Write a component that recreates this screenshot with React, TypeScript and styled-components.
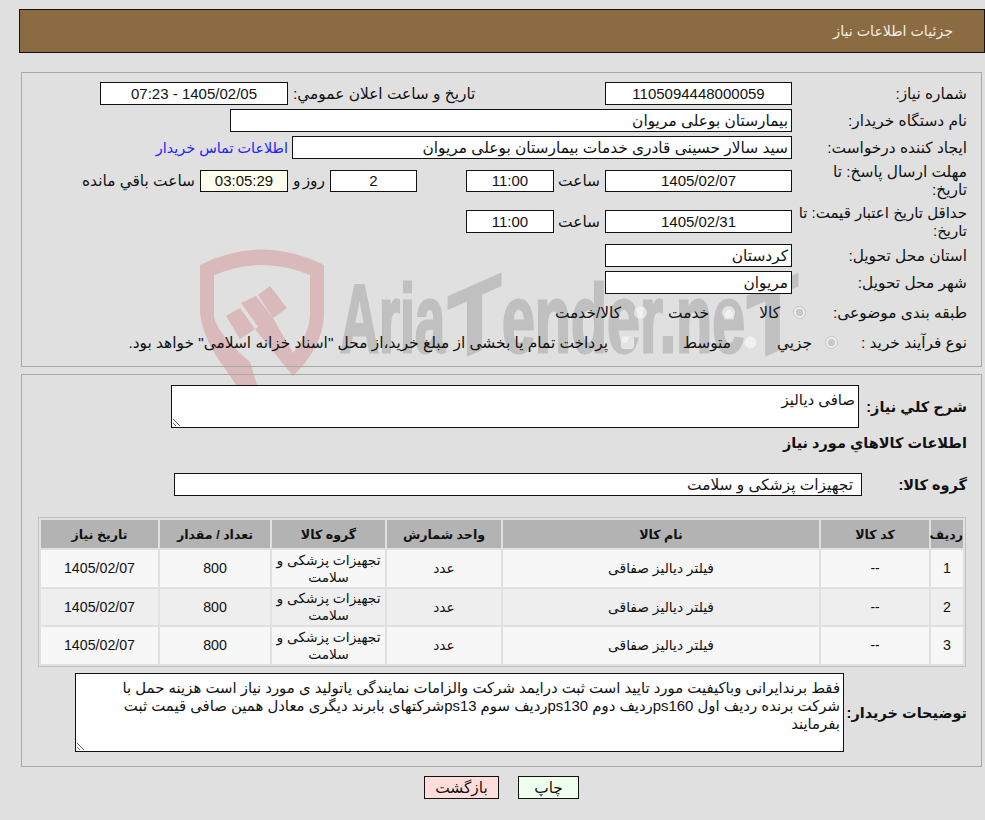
import styled, { createGlobalStyle } from 'styled-components'

const GlobalStyle = createGlobalStyle`
  html, body {
    margin: 0;
    padding: 0;
    background: #e0e0e0;
  }

  body {
    font-family: 'Liberation Sans', 'DejaVu Sans', sans-serif;
    font-size: 15.4px;
    color: #111;
  }
`

const Page = styled.div`
  position: relative;
  width: 985px;
  height: 820px;
  padding: 9px 0 0 19px;
  box-sizing: border-box;
  overflow: hidden;
`

const Watermark = styled.svg`
  position: absolute;
  left: 0;
  top: 0;
  width: 985px;
  height: 400px;
`

const WatermarkText = styled.text`
  fill: #c0c0c0;
  stroke: #c0c0c0;
  stroke-width: 3px;
  font-family: 'Liberation Sans Narrow', 'Liberation Sans', sans-serif;
  font-weight: 700;
  font-size: 96px;
`

const Content = styled.div`
  position: relative;
  direction: rtl;
`

const Header = styled.header`
  height: 44px;
  box-sizing: border-box;
  border: 1px solid #111;
  background: #8b6b42;
  color: #f4efe6;
  padding-right: 31px;
  font-size: 14.2px;
  line-height: 42px;
  margin-bottom: 19px;
`

const Panel = styled.section<{ $height: number; $top: number }>`
  width: 961px;
  height: ${({ $height }) => $height}px;
  margin: 0 3px 7px 0;
  box-sizing: border-box;
  border: 1px solid #a8a8a8;
  padding: ${({ $top }) => $top}px 14px 0 0;
`

const Stack = styled.div`
  display: flex;
  flex-direction: column;
  gap: 4px;
`

const Row = styled.div<{ $height?: number }>`
  display: flex;
  align-items: center;
  height: ${({ $height }) => $height ?? 23}px;
`

const Label = styled.div<{ $width?: number }>`
  width: ${({ $width }) => $width ?? 175}px;
  flex: none;
  line-height: 18px;
  white-space: nowrap;
`

const SmallLabel = styled(Label)`
  font-size: 15px;
`

const BoldLabel = styled(Label)`
  font-size: 14.5px;
  font-weight: 700;
`

const Field = styled.div<{ $width: number; $height?: number; $alignRight?: boolean; $warm?: boolean; $digits?: boolean }>`
  width: ${({ $width }) => $width}px;
  height: ${({ $height }) => $height ?? 23}px;
  flex: none;
  box-sizing: border-box;
  border: 1px solid #111;
  background: ${({ $warm }) => ($warm ? '#ffffee' : '#fff')};
  padding: 0 3px;
  font-size: ${({ $digits }) => ($digits ? '15px' : 'inherit')};
  line-height: ${({ $height }) => ($height ?? 23) - 2}px;
  text-align: ${({ $alignRight }) => ($alignRight ? 'right' : 'center')};
`

const GroupField = styled(Field)`
  padding-right: 8px;
`

const Caption = styled.div<{ $width: number; $end?: boolean }>`
  width: ${({ $width }) => $width}px;
  flex: none;
  box-sizing: border-box;
  padding: 0 5px;
  white-space: nowrap;
  text-align: ${({ $end }) => ($end ? 'left' : 'center')};
`

const DayCaption = styled(Caption)`
  word-spacing: -2px;
`

const ContactLink = styled.a`
  margin-right: 4px;
  color: #2323ff;
  font-size: 14.4px;
  white-space: nowrap;
`

const ChoiceRow = styled(Row)<{ $first?: boolean }>`
  height: 30px;
  margin-top: ${({ $first }) => ($first ? 4 : 0)}px;
`

const Option = styled.label<{ $width?: number }>`
  display: flex;
  align-items: center;
  gap: 13px;
  flex: none;
  width: ${({ $width }) => ($width ? `${$width}px` : 'auto')};
  white-space: nowrap;
`

const Radio = styled.span<{ $checked?: boolean; $square?: boolean }>`
  width: 13px;
  height: 13px;
  flex: none;
  box-sizing: border-box;
  margin-bottom: 2px;
  border: 1px solid ${({ $checked }) => ($checked ? '#c4c4c4' : '#e8e8e8')};
  border-radius: ${({ $square }) => ($square ? '3px' : '50%')};
  background: ${({ $checked }) =>
    $checked ? 'radial-gradient(circle, #c8c8c8 0 3.5px, #eeeeee 4px)' : 'rgba(255, 255, 255, 0.55)'};
`

const Note = styled.textarea<{ $width: number; $height: number }>`
  width: ${({ $width }) => $width}px;
  height: ${({ $height }) => $height}px;
  flex: none;
  box-sizing: border-box;
  border: 1px solid #111;
  border-radius: 0;
  outline: none;
  background: #fff;
  color: #111;
  padding: 5px 3px 0;
  margin: 0;
  font: inherit;
  font-size: 14.9px;
  line-height: 18px;
  direction: rtl;
`

const HeadingRow = styled(Row)`
  height: 30px;
`

const GroupRow = styled(Row)`
  margin: 15px 0 21px;
`

const NotesRow = styled(Row)`
  height: 79px;
  margin-top: 6px;
`

const GoodsTable = styled.table`
  width: 928px;
  margin-right: 1px;
  table-layout: fixed;
  border: 1px solid #c2c2c2;
  border-collapse: separate;
  border-spacing: 2px;
  text-align: center;
`

const HeadCell = styled.th`
  height: 28px;
  padding: 0;
  background: #b3b3b3;
  font-size: 12.6px;
  font-weight: 700;
`

const BodyRow = styled.tr`
  background: #f7f7f7;

  &:nth-child(even) {
    background: #eeeeee;
  }

  &:nth-child(even) td {
    height: 36px;
  }
`

const BodyCell = styled.td<{ $digits?: boolean }>`
  height: 37px;
  padding: 0 1px;
  font-size: ${({ $digits }) => ($digits ? '14.2px' : '13.8px')};
  line-height: 17px;
`

const Actions = styled.div`
  display: flex;
  justify-content: center;
  gap: 19px;
  width: 961px;
  margin: 9px 3px 0 0;
`

const ActionButton = styled.button<{ $width: number; $tone: string }>`
  width: ${({ $width }) => $width}px;
  height: 23px;
  padding: 0;
  border: 1px solid #111;
  background: ${({ $tone }) => $tone};
  color: #111;
  font: inherit;
`

const columns = [32, 108, 316, 114, 113, 110, 117]
const titles = ['رديف', 'كد كالا', 'نام كالا', 'واحد شمارش', 'گروه كالا', 'تعداد / مقدار', 'تاريخ نياز']
const rows = ['1', '2', '3']

const notes =
  'فقط برندایرانی وباکیفیت مورد تایید است ثبت درایمد شرکت والزامات نمایندگی یاتولید ی مورد نیاز است هزینه حمل با شرکت برنده ردیف اول ps160ردیف دوم ps130ردیف سوم ps13شرکتهای بابرند دیگری معادل همین صافی قیمت ثبت بفرمایند'

// the two T's of the logo lean upwards to the right
const logoParts = [
  { text: 'Aria', x: 340, width: 105 },
  { text: 'T', x: 448, width: 53, lean: true },
  { text: 'ender.ne', x: 502, width: 243 },
  { text: 'T', x: 747, width: 51, lean: true },
]

export default function App() {
  return (
    <Page>
      <GlobalStyle />
      <Watermark viewBox="0 0 985 400">
        <path
          fill="#d9b9b9"
          d="M200 265 Q262 234 324 265 L324 316 Q322 348 293 376 L255 329 L273 318 L293 353 Q309 335 310 316 L310 275 Q262 255 214 275 L214 317 Q218 335 250 362 L257 385 L236 385 L226 370 Q203 340 200 313 Z"
        />
        <path fill="#d9b9b9" d="M226 316 L240 308 L255 329 L240 339 Z" />
        <path fill="#d9b9b9" d="M241 303 L256 296 L273 318 L259 328 Z" />
        <path fill="#d9b9b9" d="M258 295 L270 286 L287 308 L273 318 Z" />
        {logoParts.map(({ text, x, width, lean }) => {
          const middle = x + width / 2
          return (
            <WatermarkText
              key={x}
              x={x}
              y={352}
              textLength={width}
              lengthAdjust="spacingAndGlyphs"
              transform={lean ? `translate(${middle} 352) skewY(-24) translate(${-middle} -352)` : undefined}
            >
              {text}
            </WatermarkText>
          )
        })}
      </Watermark>
      <Content>
        <Header>جزئيات اطلاعات نياز</Header>

        <Panel $height={295} $top={9}>
          <Stack>
            <Row>
              <Label>شماره نياز:</Label>
              <Field $width={187} $digits>
                1105094448000059
              </Field>
              <Caption $width={317} $end>
                تاريخ و ساعت اعلان عمومي:
              </Caption>
              <Field $width={188} $digits>
                1405/02/05 - 07:23
              </Field>
            </Row>
            <Row>
              <Label>نام دستگاه خريدار:</Label>
              <Field $width={562} $alignRight>
                بيمارستان بوعلی مريوان
              </Field>
            </Row>
            <Row>
              <Label>ايجاد كننده درخواست:</Label>
              <Field $width={500} $alignRight>
                سيد سالار حسينی قادری خدمات بيمارستان بوعلی مريوان
              </Field>
              <ContactLink>اطلاعات تماس خريدار</ContactLink>
            </Row>
            <Row $height={36}>
              <Label>
                مهلت ارسال پاسخ: تا
                <br />
                تاريخ:
              </Label>
              <Field $width={187} $height={22} $digits>
                1405/02/07
              </Field>
              <Caption $width={51}>ساعت</Caption>
              <Field $width={88} $height={22} $digits>
                11:00
              </Field>
              <Caption $width={49} />
              <Field $width={87} $height={22} $digits>
                2
              </Field>
              <DayCaption $width={42}>روز و</DayCaption>
              <Field $width={88} $height={22} $warm $digits>
                03:05:29
              </Field>
              <Caption $width={122}>ساعت باقي مانده</Caption>
            </Row>
            <Row $height={37}>
              <SmallLabel>
                حداقل تاريخ اعتبار قيمت: تا
                <br />
                تاريخ:
              </SmallLabel>
              <Field $width={187} $digits>
                1405/02/31
              </Field>
              <Caption $width={51}>ساعت</Caption>
              <Field $width={88} $digits>
                11:00
              </Field>
            </Row>
            <Row>
              <Label>استان محل تحويل:</Label>
              <Field $width={187} $alignRight>
                كردستان
              </Field>
            </Row>
            <Row>
              <Label>شهر محل تحويل:</Label>
              <Field $width={187} $alignRight>
                مريوان
              </Field>
            </Row>
          </Stack>
          <ChoiceRow $first>
            <Label $width={161}>طبقه بندی موضوعی:</Label>
            <Option $width={71}>
              <Radio $checked />
              كالا
            </Option>
            <Option $width={88}>
              <Radio />
              خدمت
            </Option>
            <Option>
              <Radio />
              كالا/خدمت
            </Option>
          </ChoiceRow>
          <ChoiceRow>
            <Label $width={129}>نوع فرآيند خريد :</Label>
            <Option $width={81}>
              <Radio $checked />
              جزيي
            </Option>
            <Option $width={123}>
              <Radio />
              متوسط
            </Option>
            <Option>
              <Radio $square />
              پرداخت تمام يا بخشی از مبلغ خريد،از محل "اسناد خزانه اسلامی" خواهد بود.
            </Option>
          </ChoiceRow>
        </Panel>

        <Panel $height={393} $top={10}>
          <Row $height={43}>
            <BoldLabel $width={108}>شرح كلي نياز:</BoldLabel>
            <Note $width={688} $height={43} readOnly defaultValue="صافی دياليز" />
          </Row>
          <HeadingRow>
            <BoldLabel $width={400}>اطلاعات كالاهاي مورد نياز</BoldLabel>
          </HeadingRow>
          <GroupRow>
            <BoldLabel $width={105}>گروه كالا:</BoldLabel>
            <GroupField $width={688} $alignRight>
              تجهيزات پزشكی و سلامت
            </GroupField>
          </GroupRow>
          <GoodsTable>
            <colgroup>
              {columns.map((width, index) => (
                <col key={index} width={width} />
              ))}
            </colgroup>
            <thead>
              <tr>
                {titles.map((title) => (
                  <HeadCell key={title}>{title}</HeadCell>
                ))}
              </tr>
            </thead>
            <tbody>
              {rows.map((row) => (
                <BodyRow key={row}>
                  <BodyCell $digits>{row}</BodyCell>
                  <BodyCell>--</BodyCell>
                  <BodyCell>فيلتر دياليز صفاقی</BodyCell>
                  <BodyCell>عدد</BodyCell>
                  <BodyCell>تجهيزات پزشكی و سلامت</BodyCell>
                  <BodyCell $digits>800</BodyCell>
                  <BodyCell $digits>1405/02/07</BodyCell>
                </BodyRow>
              ))}
            </tbody>
          </GoodsTable>
          <NotesRow>
            <BoldLabel $width={123}>توضيحات خريدار:</BoldLabel>
            <Note $width={769} $height={79} readOnly defaultValue={notes} />
          </NotesRow>
        </Panel>

        <Actions>
          <ActionButton $width={61} $tone="#eeffee">
            چاپ
          </ActionButton>
          <ActionButton $width={75} $tone="#ffdddd">
            بازگشت
          </ActionButton>
        </Actions>
      </Content>
    </Page>
  )
}
